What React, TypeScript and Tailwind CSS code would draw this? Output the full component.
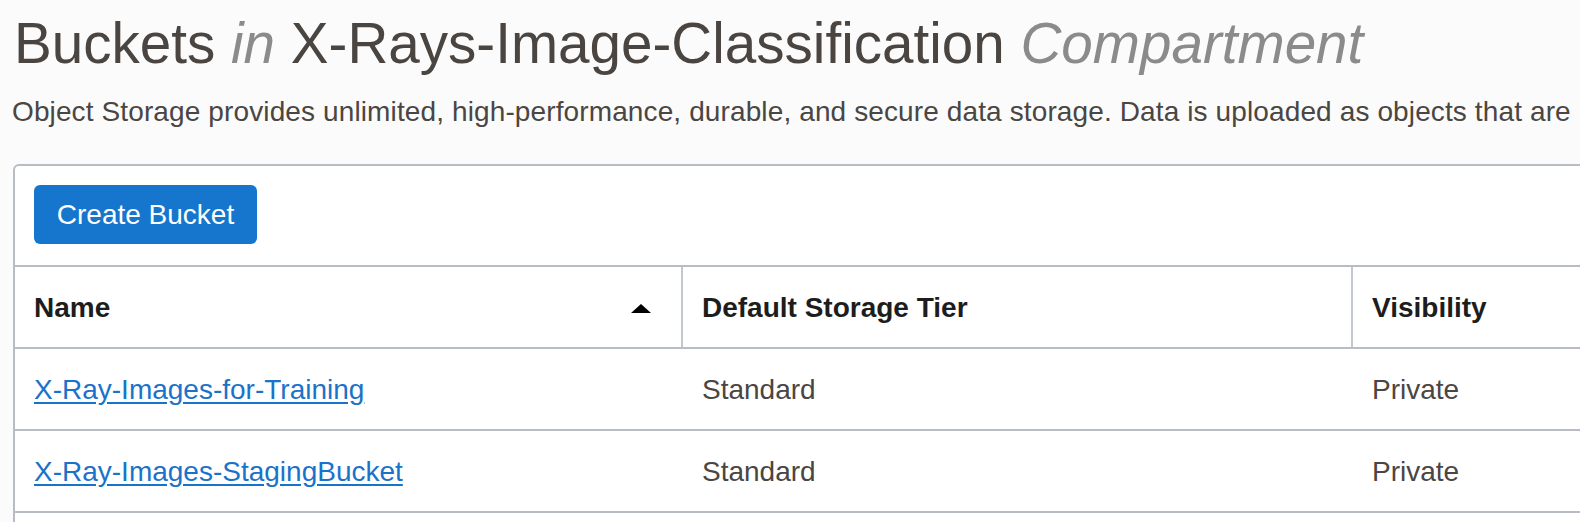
const buckets = [
  { name: "X-Ray-Images-for-Training", tier: "Standard", visibility: "Private" },
  { name: "X-Ray-Images-StagingBucket", tier: "Standard", visibility: "Private" },
];

function SortArrow() {
  return (
    <svg width="20" height="9" viewBox="0 0 20 9" className="shrink-0">
      <polygon points="0,9 10,0 20,9" fill="#000" />
    </svg>
  );
}

export default function App() {
  const cellStyling = "h-[80px] flex items-center pl-[19px] whitespace-nowrap";

  return (
    <div className="w-[1580px] h-[522px] overflow-hidden bg-[#fbfbfb] font-['Liberation_Sans',Arial,sans-serif]">
      <h1 className="pl-[14px] pt-[10px] text-[56.6px] leading-[67px] text-[#4a4541] whitespace-nowrap">
        Buckets <i className="text-[#8b8b8b]">in</i> X-Rays-Image-Classification{" "}
        <i className="text-[#8b8b8b]">Compartment</i>
      </h1>
      <p className="mt-[18px] pl-[12px] text-[28px] tracking-[0.12px] leading-[34px] text-[#4a4643] whitespace-nowrap">
        Object Storage provides unlimited, high-performance, durable, and secure data
        storage. Data is uploaded as objects that are
      </p>

      <div className="mt-[35px] ml-[13px] w-[2100px] rounded-[6px] border-2 border-[#b8bdc5] bg-white">
        <div className="pt-[19px] pb-[21px] pl-[19px]">
          <button className="h-[59px] w-[223px] rounded-[6px] bg-[#1675cc] text-[28px] text-white">
            Create Bucket
          </button>
        </div>

        <div className="border-t-2 border-[#b8bdc5]">
          {/* header */}
          <div className="grid grid-cols-[666px_670px_1fr] border-b-2 border-[#b8bdc5] text-[28px] font-bold text-[#1d1d1d]">
            <div className={`${cellStyling} justify-between pr-[30px] pt-[2px]`}>
              <span>Name</span>
              <SortArrow />
            </div>
            <div className={`${cellStyling} pt-[2px] border-l-2 border-[#c3c7ce]`}>Default Storage Tier</div>
            <div className={`${cellStyling} pt-[2px] border-l-2 border-[#c3c7ce]`}>Visibility</div>
          </div>

          {buckets.map((bucket) => (
            <div
              key={bucket.name}
              className="grid grid-cols-[666px_670px_1fr] border-b-2 border-[#b8bdc5] text-[28px] text-[#4a4643]"
            >
              <div className={`${cellStyling} pt-[2px]`}>
                <a href="#" className="text-[#1a73c9] underline underline-offset-[3px]">
                  {bucket.name}
                </a>
              </div>
              <div className={`${cellStyling} pt-[2px] pl-[21px]`}>{bucket.tier}</div>
              <div className={`${cellStyling} pt-[2px] pl-[21px]`}>{bucket.visibility}</div>
            </div>
          ))}
          <div className="h-[60px]" />
        </div>
      </div>
    </div>
  );
}
